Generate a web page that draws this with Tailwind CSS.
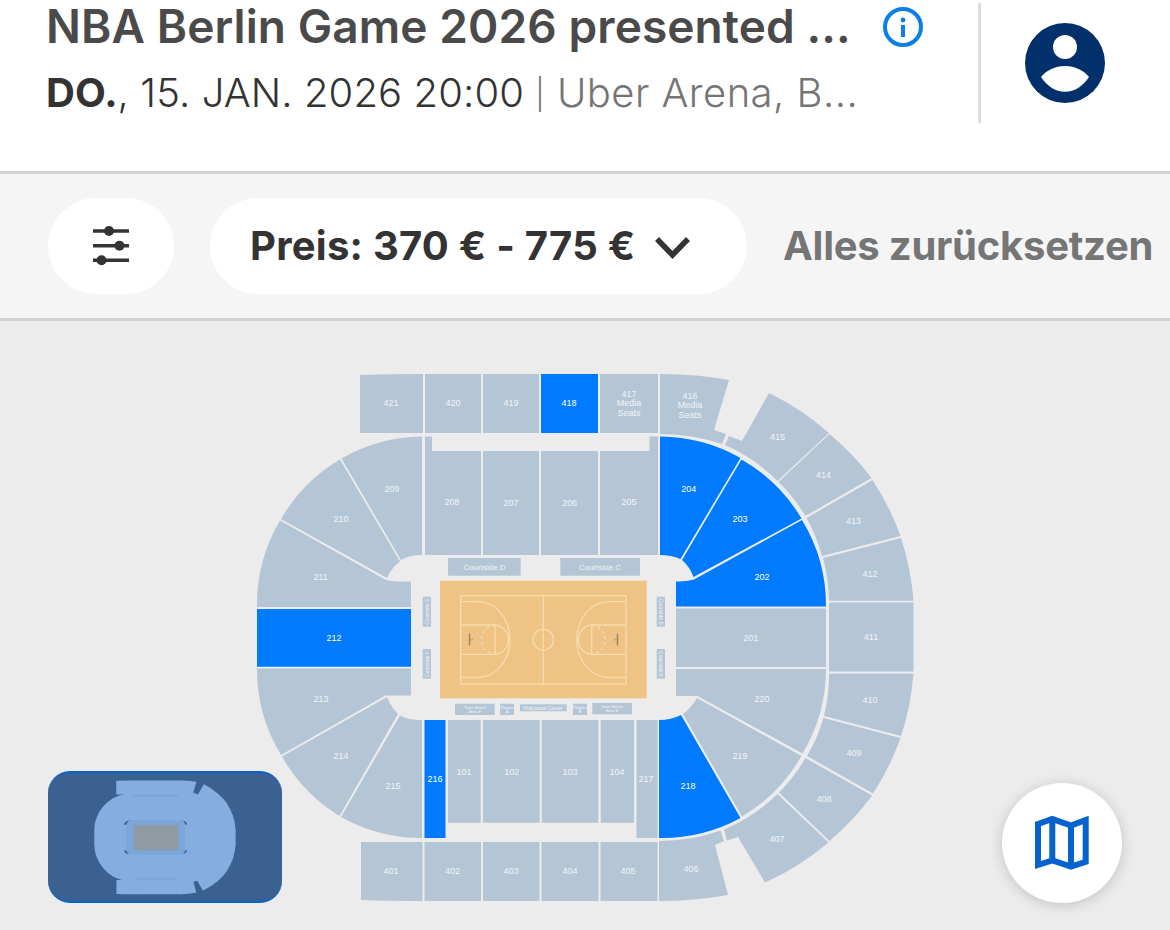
<!DOCTYPE html>
<html lang="de">
<head>
  <meta charset="UTF-8" />
  <meta name="viewport" content="width=device-width, initial-scale=1.0" />
  <title>NBA Berlin Game 2026</title>
  <script src="https://cdn.jsdelivr.net/npm/@tailwindcss/browser@4"></script>
</head>
<body class="bg-[#ececec] h-[930px] w-[1170px] overflow-hidden font-['Inter',sans-serif]">

  <!-- Event header -->
  <header class="h-[174px] bg-white border-b-[3px] border-[#d2d2d2] flex items-start">
    <div class="w-[882px] pl-[46px] shrink-0">
      <h1 class="h-[52px] text-[46px] leading-[52px] font-semibold text-[#4a4a4a] whitespace-nowrap tracking-[0.1px]">NBA Berlin Game 2026 presented ...</h1>
      <p class="mt-[15px] text-[40px] leading-[52px] font-light text-[#333] whitespace-nowrap tracking-[0.1px]"><span class="font-bold">DO.</span>, 15. JAN. 2026 20:00 <span class="text-[#757575] tracking-[0.45px]"><span class="text-[30px] align-[2px]">|</span> Uber Arena, B...</span></p>
    </div>
    <svg class="mt-[6px]" width="44" height="44" viewBox="0 0 44 44">
      <circle cx="21" cy="21" r="18" fill="none" stroke="#0b7fe6" stroke-width="4"/>
      <circle cx="21" cy="14" r="2.400" fill="#0b7fe6"/>
      <rect x="19" y="19" width="4" height="12" fill="#0b7fe6"/>
    </svg>
    <div class="ml-[52px] mt-[3px] w-[3px] h-[120px] bg-[#dcdcdc]"></div>
    <svg class="ml-[43px] mt-[22px]" width="82" height="82" viewBox="1024 22 82 82">
      <circle cx="1065" cy="63" r="40" fill="#02306b"/>
      <circle cx="1065" cy="47" r="12" fill="#fff"/>
      <path d="M1041 77C1047 70 1055 66 1065 66C1075 66 1083 70 1089 77C1083 86 1075 91.700 1065 91.700C1055 91.700 1047 86 1041 77Z" fill="#fff"/>
    </svg>
  </header>

  <!-- Filters -->
  <div class="h-[147px] bg-[#f5f5f5] border-b-[3px] border-[#d2d2d2] flex items-center pl-[48px]">
    <button class="w-[126px] h-[96px] rounded-full bg-white flex items-center justify-center shrink-0">
      <svg width="38" height="40" viewBox="0 0 38 40" fill="#333" stroke="#333">
        <path d="M1 5H37M1 19.700H37M1 34.300H37" stroke-width="3.400" fill="none"/>
        <circle cx="17" cy="5" r="5" stroke="none"/>
        <circle cx="27.500" cy="19.700" r="5" stroke="none"/>
        <circle cx="9.500" cy="34.300" r="5" stroke="none"/>
      </svg>
    </button>
    <button class="ml-[36px] w-[537px] h-[96px] rounded-full bg-white flex items-center pl-[40px] shrink-0">
      <span class="text-[40px] font-bold text-[#333] whitespace-nowrap tracking-[0.25px]">Preis: 370 € - 775 €</span>
      <svg class="ml-[20px] mt-[4px]" width="35" height="24" viewBox="0 0 35 24" fill="none" stroke="#333" stroke-width="5.500"><path d="M2 3L17.500 19L33 3"/></svg>
    </button>
    <span class="ml-[36px] text-[40px] font-bold text-[#757575] whitespace-nowrap tracking-[-0.25px]">Alles zurücksetzen</span>
  </div>

  <!-- Seat map -->
  <main class="relative h-[609px]">
    <svg class="block" width="1170" height="609" viewBox="0 321 1170 609">
      <defs>
        <g id="plain">
          <path d="M360 375Q390 374 423 374V433H360Z"/>
          <path d="M425 374H481V433H425Z"/>
          <path d="M483 374H539V433H483Z"/>
          <path d="M600 374H658V433H600Z"/>
          <path d="M660 374Q698 374 729 380L714 430L726 434L722 444Q692 434 660 434Z"/>
          <path d="M769 393A265 265 0 0 1 829 433L777.500 481A170 170 0 0 0 725 445L729 436L742 441Z"/>
          <path d="M778.500 482L829.500 434A265 265 0 0 1 871.500 478L805.500 516A170 170 0 0 0 778.500 482Z"/>
          <path d="M806.500 518L872.500 480A265 265 0 0 1 900.500 536L822 556A170 170 0 0 0 806.500 518Z"/>
          <path d="M823 558L901 538A265 265 0 0 1 913.500 600.700H829A170 170 0 0 0 823 558Z"/>
          <path d="M829 602.500H913.500V671.500H829Z"/>
          <path d="M829 673.500H913.500A265 265 0 0 1 901 736L824 716A170 170 0 0 0 829 673.500Z"/>
          <path d="M823.500 718L900.500 738A265 265 0 0 1 873 793.500L807 756A170 170 0 0 0 823.500 718Z"/>
          <path d="M805.500 758L872 795.500A265 265 0 0 1 829.500 841L779 792.500A170 170 0 0 0 805.500 758Z"/>
          <path d="M777.500 794L828.500 842.500A265 265 0 0 1 765 882.500L738 837L727 840.500L724 829.500A170 170 0 0 0 777.500 794Z"/>
          <path d="M659 841Q692 841 720.500 830.500L724 841L715 845L728 895Q694 901 659 901Z"/>
          <path d="M361 842H422.500V901Q390 901 361 900Z"/>
          <path d="M424.500 842H481V901H424.500Z"/>
          <path d="M483 842H539.500V901H483Z"/>
          <path d="M541.500 842H598.500V901H541.500Z"/>
          <path d="M600.500 842H657.500V901H600.500Z"/>
          <path d="M425 436.500H432V451H481V555H425Z"/>
          <path d="M483 451H539V555H483Z"/>
          <path d="M541 451H598V555H541Z"/>
          <path d="M600 451H649.500V436.500H658V555H600Z"/>
          <path d="M422 436.500V555Q410 555 401 560L341.500 458.500A165 165 0 0 1 422 436.500Z"/>
          <path d="M400 561.500Q392 567 387 578L281 519A165 165 0 0 1 340 459.500Z"/>
          <path d="M386 580Q395 582 411 581.500V607H257A165 165 0 0 1 280 520.500Z"/>
          <path d="M257 668.500H411V695.500H385.500L281 755A165 165 0 0 1 257 668.500Z"/>
          <path d="M387 697Q391 707 398 714L339.500 816A165 165 0 0 1 282 756.500Z"/>
          <path d="M400 715.500Q408 720 422 720V838A165 165 0 0 1 341 817Z"/>
          <path d="M448 720H480.700V822.700H448Z"/>
          <path d="M483 720H539.700V822.700H483Z"/>
          <path d="M541.700 720H598.300V822.700H541.700Z"/>
          <path d="M600.700 720H634V822.700H600.700Z"/>
          <path d="M636.500 720H657.500V838H636.500Z"/>
          <path d="M683 714Q691 708 697 698L801.500 756A165 165 0 0 1 742 816.500Z"/>
          <path d="M676 669H826A165 165 0 0 1 802.500 753.500L697.500 696H676Z"/>
          <path d="M676 608.500H826V667H676Z"/>
        </g>
        <g id="blue">
          <path d="M541 374H598V433H541Z"/>
          <path d="M257 609H411V666.700H257Z"/>
          <path d="M424.500 720H445.500V838H424.500Z"/>
          <path d="M659 720Q671 720 681 715L740.500 818A165 165 0 0 1 659 838Z"/>
          <path d="M660 436.500A165 165 0 0 1 740.500 458L680.500 559Q671 555 660 555Z"/>
          <path d="M741.500 459.500A165 165 0 0 1 801.500 518.500L693.500 577Q690 567 682 560Z"/>
          <path d="M802 520A165 165 0 0 1 826 606.500H676V581.500Q685 582 694 579.500Z"/>
        </g>
      </defs>

      <use href="#plain" fill="#b4c5d6"/>
      <use href="#blue" fill="#007bff"/>

      <!-- Courtside labels -->
      <g fill="#b4c5d6">
        <rect x="448" y="558" width="72.700" height="17.700"/>
        <rect x="560.300" y="558" width="79.700" height="17.700"/>
        <rect x="422.700" y="596.700" width="8.300" height="30"/>
        <rect x="422.700" y="649" width="8.300" height="29.700"/>
        <rect x="656.700" y="596.700" width="8.300" height="30"/>
        <rect x="656.700" y="649" width="8.300" height="29.700"/>
        <rect x="455" y="703.700" width="39.700" height="11.300"/>
        <rect x="500" y="703.700" width="14" height="11.300"/>
        <rect x="520" y="704.300" width="46.700" height="7"/>
        <rect x="573" y="703.700" width="14" height="11.300"/>
        <rect x="592.300" y="703" width="39.700" height="11.300"/>
      </g>

      <!-- Court -->
      <rect x="440" y="580.700" width="206.700" height="117.600" fill="#efc384"/>
      <g fill="none" stroke="#f6dcae" stroke-width="1.300">
        <rect x="460.700" y="595.700" width="165.300" height="88.300"/>
        <path d="M543.300 595.700V684"/>
        <circle cx="543.300" cy="639.700" r="10.300"/>
        <path d="M460.700 625H495V654.300H460.700M626 625H591.700V654.300H626"/>
        <path d="M495 625A14.700 14.700 0 0 1 495 654.300M591.700 625A14.700 14.700 0 0 0 591.700 654.300"/>
        <path d="M495 625A14.700 14.700 0 0 0 495 654.300M591.700 625A14.700 14.700 0 0 1 591.700 654.300" stroke-dasharray="3 3"/>
        <path d="M460.700 601.700H478A32 37.900 0 0 1 478 677.500H460.700M626 601.700H608.700A32 37.900 0 0 0 608.700 677.500H626"/>
      </g>
      <path d="M469.500 633.500V645.500M617.500 633.500V645.500" stroke="#9c8258" stroke-width="1.400"/>
      <path d="M470 639.500H473M617 639.500H614" stroke="#c4a878" stroke-width="2"/>

      <!-- Seat numbers -->
      <g class="font-['Liberation_Sans',sans-serif] text-[9px] [text-anchor:middle] fill-white/80">
        <text x="391" y="406">421</text><text x="453" y="406">420</text><text x="511" y="406">419</text>
        <text x="629" y="397">417</text><text x="629" y="406">Media</text><text x="629" y="415.500">Seats</text>
        <text x="690" y="399">416</text><text x="690" y="408">Media</text><text x="690" y="417.500">Seats</text>
        <text x="777.500" y="439.500">415</text><text x="823.500" y="478">414</text><text x="853.500" y="523.700">413</text>
        <text x="870" y="576.500">412</text><text x="871" y="640">411</text><text x="870" y="703">410</text>
        <text x="854" y="756">409</text><text x="824" y="802">408</text><text x="777" y="841.500">407</text>
        <text x="691" y="872">406</text><text x="628" y="874">405</text><text x="570" y="874">404</text>
        <text x="511" y="874">403</text><text x="452.500" y="874">402</text><text x="391" y="874">401</text>
        <text x="392" y="491.700">209</text><text x="341" y="522">210</text><text x="320.700" y="580">211</text>
        <text x="321" y="701.500">213</text><text x="341" y="758.700">214</text><text x="393" y="788.500">215</text>
        <text x="464" y="774.700">101</text><text x="511.700" y="774.700">102</text><text x="570" y="774.700">103</text>
        <text x="617" y="774.700">104</text><text x="646" y="782">217</text>
        <text x="740" y="759">219</text><text x="762" y="702">220</text><text x="750.700" y="641">201</text>
        <text x="629" y="504.700">205</text><text x="569.700" y="506">206</text><text x="511" y="506">207</text><text x="452" y="505">208</text>
        <text x="484.500" y="570" class="text-[8px]">Courtside D</text>
        <text x="600" y="570" class="text-[8px]">Courtside C</text>
        <text x="475" y="708.500" class="text-[4px]">Team Bench</text><text x="475" y="713" class="text-[4px]">Area F</text>
        <text x="507" y="708.500" class="text-[4px]">Players</text><text x="507" y="713" class="text-[4px]">A</text>
        <text x="543" y="709.500" class="text-[5px]">Hollywood Center</text>
        <text x="580" y="708.500" class="text-[4px]">Players</text><text x="580" y="713" class="text-[4px]">B</text>
        <text x="612" y="707.500" class="text-[4px]">Team Bench</text><text x="612" y="712" class="text-[4px]">Area B</text>
        <text transform="translate(428.500 611.700) rotate(-90)" class="text-[5px]">Courtside E</text>
        <text transform="translate(428.500 664) rotate(-90)" class="text-[5px]">Courtside F</text>
        <text transform="translate(659.200 611.700) rotate(90)" class="text-[5px]">Courtside B</text>
        <text transform="translate(659.200 664) rotate(90)" class="text-[5px]">Courtside A</text>
      </g>
      <g class="font-['Liberation_Sans',sans-serif] text-[9px] [text-anchor:middle] fill-white">
        <text x="569" y="406">418</text><text x="334" y="641">212</text><text x="435" y="782">216</text>
        <text x="688" y="788.500">218</text><text x="688.700" y="491.700">204</text><text x="740" y="522">203</text><text x="762" y="579.700">202</text>
      </g>
    </svg>

    <!-- Mini map -->
    <div class="absolute left-[48px] top-[450px] w-[234px] h-[132px] rounded-[22px] overflow-hidden bg-[#3a6190] border-y-2 border-[#0563c9]">
      <svg width="234" height="128" viewBox="48 773 234 128">
        <g transform="translate(40.300 701.500) scale(0.213)">
          <rect x="425" y="430" width="233" height="415" fill="#7ca6d9"/>
          <use href="#plain" fill="#84aee0" stroke="#84aee0" stroke-width="7"/>
          <use href="#blue" fill="#84aee0" stroke="#84aee0" stroke-width="7"/>
          <rect x="405" y="556" width="275" height="164" rx="24" fill="#7ca6d9"/>
          <rect x="440" y="581" width="207" height="117" fill="#8f9aa3"/>
        </g>
      </svg>
    </div>

    <!-- Map toggle -->
    <button class="absolute left-[1002px] top-[462px] w-[120px] h-[120px] rounded-full bg-white shadow-[0_2px_14px_rgba(0,0,0,0.18)] flex items-center justify-center">
      <svg width="60" height="60" viewBox="1032 813 60 60" fill="none" stroke="#0563d0" stroke-width="6">
        <path d="M1038 824L1052.300 819L1071 825.500L1085.700 820V861.800L1071 866.500L1052.300 860.500L1038 865ZM1052.300 819V860.500M1071 825.500V866.500"/>
      </svg>
    </button>
  </main>
</body>
</html>
